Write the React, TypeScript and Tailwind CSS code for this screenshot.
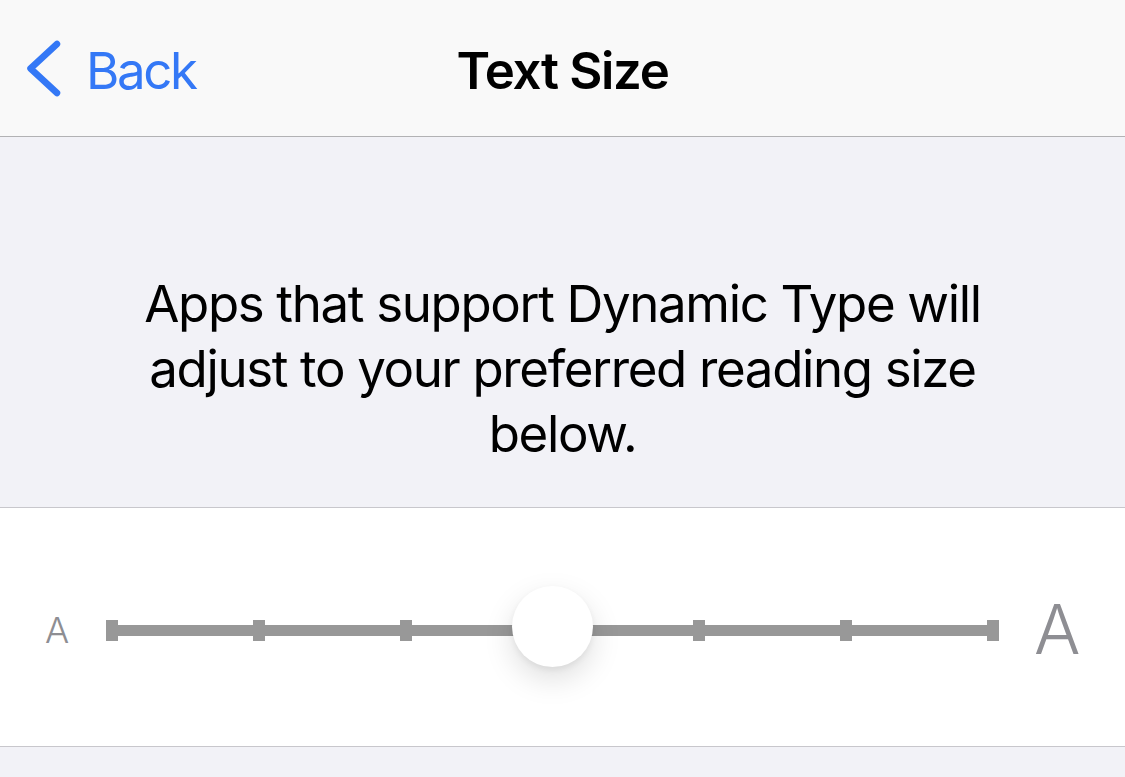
import React from "react";

const ticks = [0, 1, 2, 3, 4, 5, 6];

export default function App() {
  return (
    <div
      className="w-[1125px] h-[777px] overflow-hidden bg-[#f2f2f7] flex flex-col"
      style={{ fontFamily: "Inter, 'Noto Sans', 'Liberation Sans', sans-serif" }}
    >
      {/* Nav bar */}
      <div className="relative h-[137px] shrink-0 bg-[#f9f9f9] border-b border-[#b2b2b4] flex items-center pt-[7px]">
        <div className="flex items-center pl-[24px] text-[#3478f6]">
          <svg width="40" height="64" viewBox="0 0 40 64" className="-mt-[7px]">
            <path
              d="M33 8 L6.5 32.5 L33 57"
              fill="none"
              stroke="#3478f6"
              strokeWidth="6.5"
              strokeLinecap="round"
              strokeLinejoin="round"
            />
          </svg>
          <span className="ml-[22px] text-[51px] tracking-[-2.4px]">Back</span>
        </div>
        <div className="absolute inset-x-0 top-[7px] bottom-0 flex items-center justify-center pointer-events-none">
          <span className="text-[51px] font-semibold text-black tracking-[-1.35px]">Text Size</span>
        </div>
      </div>

      {/* Description */}
      <div className="h-[370px] shrink-0 pt-[134px] text-center text-black text-[51px] leading-[65px] tracking-[-1.35px]">
        Apps that support Dynamic Type will
        <br />
        adjust to your preferred reading size
        <br />
        below.
      </div>

      {/* Slider */}
      <div className="h-[240px] shrink-0 bg-white border-y border-[#c8c7cc] flex items-center pt-[6px]">
        <div className="w-[106px] shrink-0 pl-[45px]">
          <span className="text-[36px] font-light text-[#8e8e93]">A</span>
        </div>
        <div className="relative w-[893px] h-[21px] shrink-0">
          <div className="absolute left-0 right-0 top-[5px] h-[11px] bg-[#989898]" />
          <div className="absolute inset-0 flex justify-between">
            {ticks.map((t) => (
              <div key={t} className="w-[12px] h-[21px] bg-[#989898]" />
            ))}
          </div>
          <div className="absolute left-[406px] top-[-34px] w-[81px] h-[81px] rounded-full bg-white shadow-[0_12px_30px_rgba(0,0,0,0.13),0_3px_6px_rgba(0,0,0,0.06)]" />
        </div>
        <div className="pl-[35px]">
          <span className="text-[69px] font-light text-[#8e8e93]">A</span>
        </div>
      </div>
    </div>
  );
}
